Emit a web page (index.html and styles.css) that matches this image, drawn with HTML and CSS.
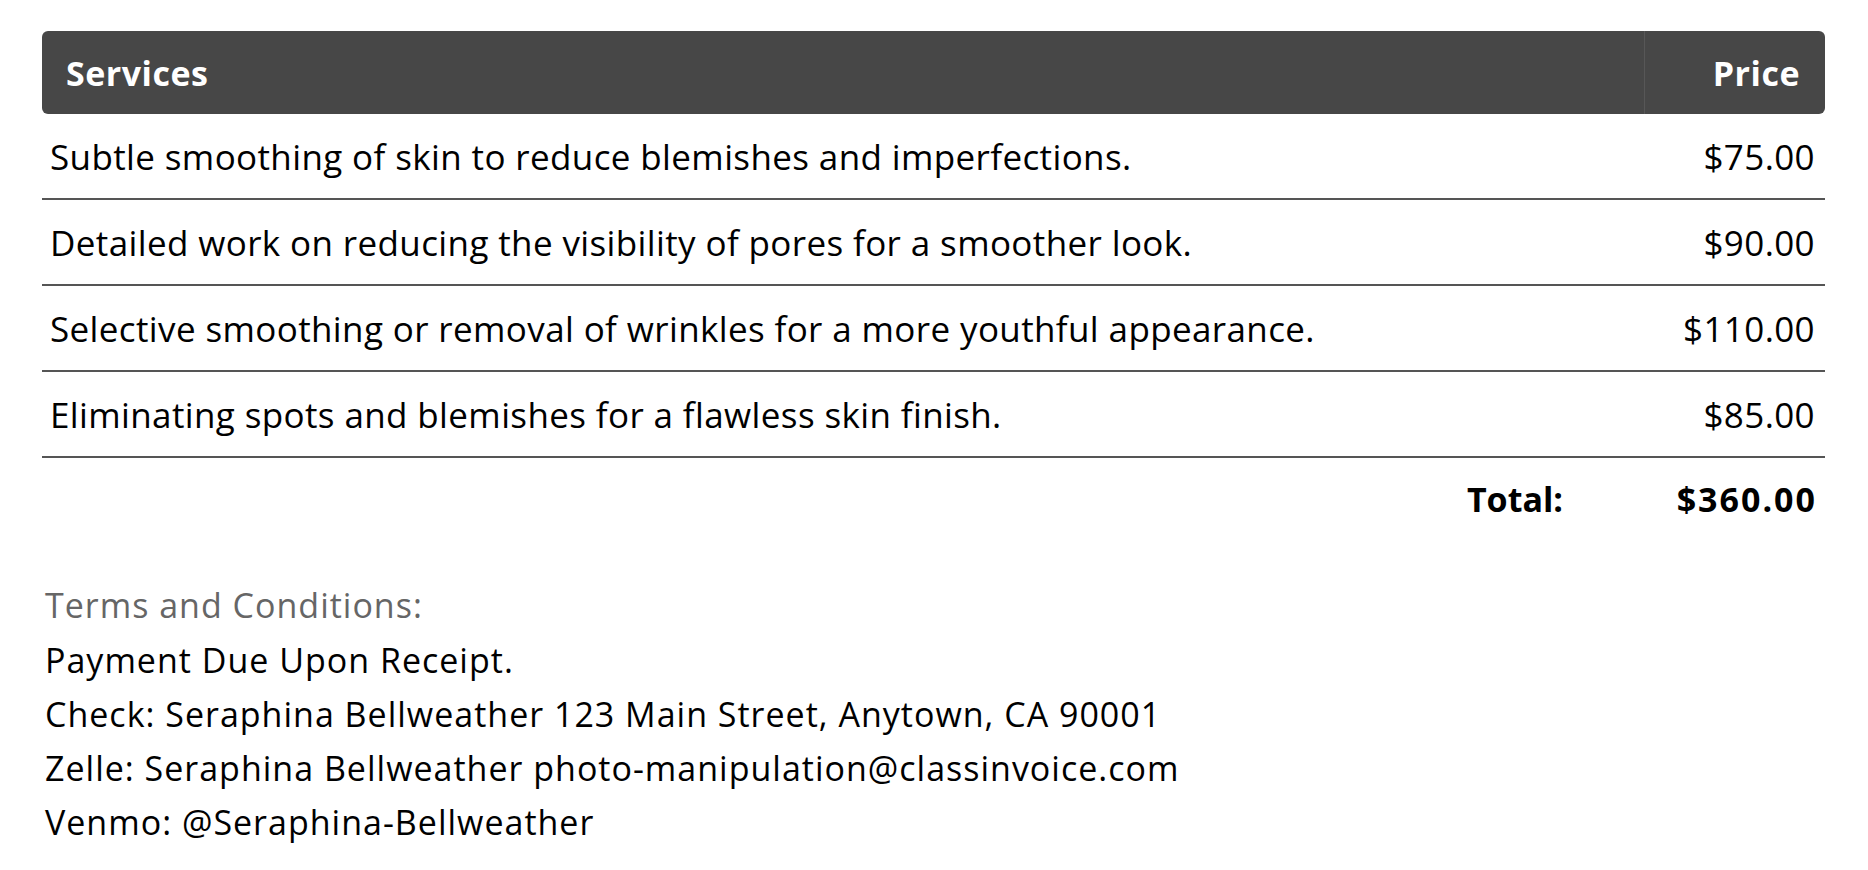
FILE: index.html
```html
<!DOCTYPE html>
<html>
<head>
<meta charset="utf-8">
<link rel="stylesheet" href="styles.css">
</head>
<body>
<div class="invoice">
  <table class="items">
    <thead>
      <tr><th class="col-svc">Services</th><th class="col-price">Price</th></tr>
    </thead>
    <tbody>
      <tr><td class="col-svc">Subtle smoothing of skin to reduce blemishes and imperfections.</td><td class="col-price">$75.00</td></tr>
      <tr><td class="col-svc">Detailed work on reducing the visibility of pores for a smoother look.</td><td class="col-price">$90.00</td></tr>
      <tr><td class="col-svc">Selective smoothing or removal of wrinkles for a more youthful appearance.</td><td class="col-price">$110.00</td></tr>
      <tr><td class="col-svc">Eliminating spots and blemishes for a flawless skin finish.</td><td class="col-price">$85.00</td></tr>
    </tbody>
  </table>
  <div class="total">
    <span class="total-label">Total:</span>
    <span class="total-value">$360.00</span>
  </div>
  <div class="terms">
    <div class="terms-title">Terms and Conditions:</div>
    <div class="terms-line">Payment Due Upon Receipt.</div>
    <div class="terms-line">Check: Seraphina Bellweather 123 Main Street, Anytown, CA 90001</div>
    <div class="terms-line">Zelle: Seraphina Bellweather photo-manipulation@classinvoice.com</div>
    <div class="terms-line">Venmo: @Seraphina-Bellweather</div>
  </div>
</div>
</body>
</html>
```
FILE: styles.css
```css
html, body {
  margin: 0;
  padding: 0;
  background: #fff;
}
body {
  font-family: "Open Sans", "Noto Sans", sans-serif;
  color: #000;
}
.invoice {
  padding: 31px 43px 0 42px;
}
.items {
  width: 100%;
  border-collapse: separate;
  border-spacing: 0;
}
.items th {
  background: #474747;
  color: #fff;
  font-weight: 700;
  font-size: 34px;
  letter-spacing: 0.5px;
  height: 83px;
  padding: 0;
}
.items th.col-svc {
  text-align: left;
  padding-left: 24px;
  border-radius: 6px 0 0 6px;
}
.items th.col-price {
  text-align: right;
  width: 155px;
  padding-right: 25px;
  border-left: 1px solid #575757;
  border-radius: 0 6px 6px 0;
}
.items td {
  font-size: 35px;
  letter-spacing: 0.38px;
  height: 84px;
  padding: 0;
  border-bottom: 2px solid #555;
  vertical-align: middle;
}
.items td.col-svc {
  padding-left: 8px;
}
.items td.col-price {
  text-align: right;
  padding-right: 10px;
}
.total {
  display: flex;
  justify-content: flex-end;
  align-items: center;
  height: 82px;
  font-size: 34px;
  font-weight: 700;
}
.total-label {
  padding-right: 82px;
}
.total-value {
  width: 172px;
  text-align: right;
  padding-right: 8px;
  letter-spacing: 2px;
}
.terms {
  padding-left: 3px;
  padding-top: 37px;
  font-size: 34px;
  letter-spacing: 1px;
}
.terms-title {
  color: #666;
  line-height: 56px;
}
.terms-line {
  line-height: 54px;
}
```
